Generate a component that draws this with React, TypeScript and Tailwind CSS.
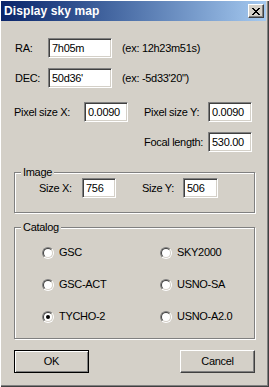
import React from 'react';

const field = 'flex items-center h-[20px] bg-white pl-[3px] border border-[#808080] border-r-white border-b-white shadow-[inset_1px_1px_0_#404040,inset_-1px_-1px_0_#d4d0c8]';

function Field({ value, width }: { value: string; width: string }) {
  return <div className={`${field} ${width}`}>{value}</div>;
}

function Radio({ label, checked }: { label: string; checked?: boolean }) {
  return (
    <div className="flex items-center h-[13px]">
      <div className="w-[12px] h-[12px] rounded-full border border-[#808080] border-r-white border-b-white">
        <div className="w-full h-full rounded-full bg-white border border-[#404040] border-r-[#d4d0c8] border-b-[#d4d0c8] flex items-center justify-center">
          {checked && <div className="w-[4px] h-[4px] rounded-full bg-black" />}
        </div>
      </div>
      <span className="ml-[5px]">{label}</span>
    </div>
  );
}

function Group({ title, className, children }: { title: string; className: string; children: React.ReactNode }) {
  return (
    <div className={`relative w-[241px] border border-[#808080] shadow-[inset_1px_1px_0_#fff,1px_1px_0_#fff] ${className}`}>
      <span className="absolute -top-[8px] left-[6px] px-[2px] bg-[#d4d0c8] leading-[14px]">{title}</span>
      {children}
    </div>
  );
}

function CloseIcon() {
  const px = [
    [0, 0], [1, 0], [6, 0], [7, 0],
    [1, 1], [2, 1], [5, 1], [6, 1],
    [2, 2], [3, 2], [4, 2], [5, 2],
    [3, 3], [4, 3],
    [2, 4], [3, 4], [4, 4], [5, 4],
    [1, 5], [2, 5], [5, 5], [6, 5],
    [0, 6], [1, 6], [6, 6], [7, 6],
  ];
  return (
    <svg width="8" height="7" viewBox="0 0 8 7" shapeRendering="crispEdges">
      {px.map(([x, y]) => (
        <rect key={`${x}-${y}`} x={x} y={y} width="1" height="1" fill="#000" />
      ))}
    </svg>
  );
}

export default function App() {
  return (
    <div className="w-[269px] h-[387px] bg-[#d4d0c8] pt-[1px] pl-[1px] pr-[3px] text-[11px] tracking-[-0.3px] text-black font-['Liberation_Sans',Arial,sans-serif] shadow-[inset_1px_1px_0_#fff,inset_-1px_-1px_0_#404040,inset_-2px_-2px_0_#808080]">
      <div className="h-[20px] flex items-center justify-between pl-[3px] pr-[2px] bg-linear-to-r from-[#0a246a] to-[#a6caf0]">
        <span className="text-white font-bold text-[12px] tracking-[0.1px]">Display sky map</span>
        <div className="w-[16px] h-[14px] flex items-center justify-center bg-[#d4d0c8] border border-white border-r-[#404040] border-b-[#404040] shadow-[inset_-1px_-1px_0_#808080]">
          <CloseIcon />
        </div>
      </div>

      <div className="pl-[13px]">
        <div className="flex items-center mt-[17px]">
          <span className="w-[34px] pl-[1px]">RA:</span>
          <Field value="7h05m" width="w-[64px]" />
          <span className="ml-[10px]">(ex: 12h23m51s)</span>
        </div>
        <div className="flex items-center mt-[10px]">
          <span className="w-[34px] pl-[1px]">DEC:</span>
          <Field value="50d36'" width="w-[64px]" />
          <span className="ml-[10px]">(ex: -5d33'20")</span>
        </div>

        <div className="flex items-center mt-[14px]">
          <span className="w-[70px]">Pixel size X:</span>
          <Field value="0.0090" width="w-[44px]" />
          <span className="w-[64px] ml-[16px]">Pixel size Y:</span>
          <Field value="0.0090" width="w-[44px]" />
        </div>
        <div className="flex items-center mt-[10px] pl-[130px]">
          <span className="w-[64px]">Focal length:</span>
          <Field value="530.00" width="w-[44px]" />
        </div>

        <Group title="Image" className="h-[41px] mt-[20px]">
          <div className="flex items-center mt-[5px] pl-[24px]">
            <span className="w-[43px]">Size X:</span>
            <Field value="756" width="w-[34px]" />
            <span className="w-[41px] ml-[26px]">Size Y:</span>
            <Field value="506" width="w-[35px]" />
          </div>
        </Group>

        <Group title="Catalog" className="h-[112px] mt-[14px]">
          <div className="grid grid-cols-[118px_1fr] pl-[27px] pt-[18px] gap-y-[19px]">
            <Radio label="GSC" />
            <Radio label="SKY2000" />
            <Radio label="GSC-ACT" />
            <Radio label="USNO-SA" />
            <Radio label="TYCHO-2" checked />
            <Radio label="USNO-A2.0" />
          </div>
        </Group>

        <div className="flex justify-between w-[241px] mt-[11px]">
          <div className="w-[75px] h-[23px] flex items-center justify-center border border-black shadow-[inset_1px_1px_0_#fff,inset_-1px_-1px_0_#808080]">
            OK
          </div>
          <div className="w-[75px] h-[23px] flex items-center justify-center border border-white border-r-[#404040] border-b-[#404040] shadow-[inset_-1px_-1px_0_#808080]">
            Cancel
          </div>
        </div>
      </div>
    </div>
  );
}
